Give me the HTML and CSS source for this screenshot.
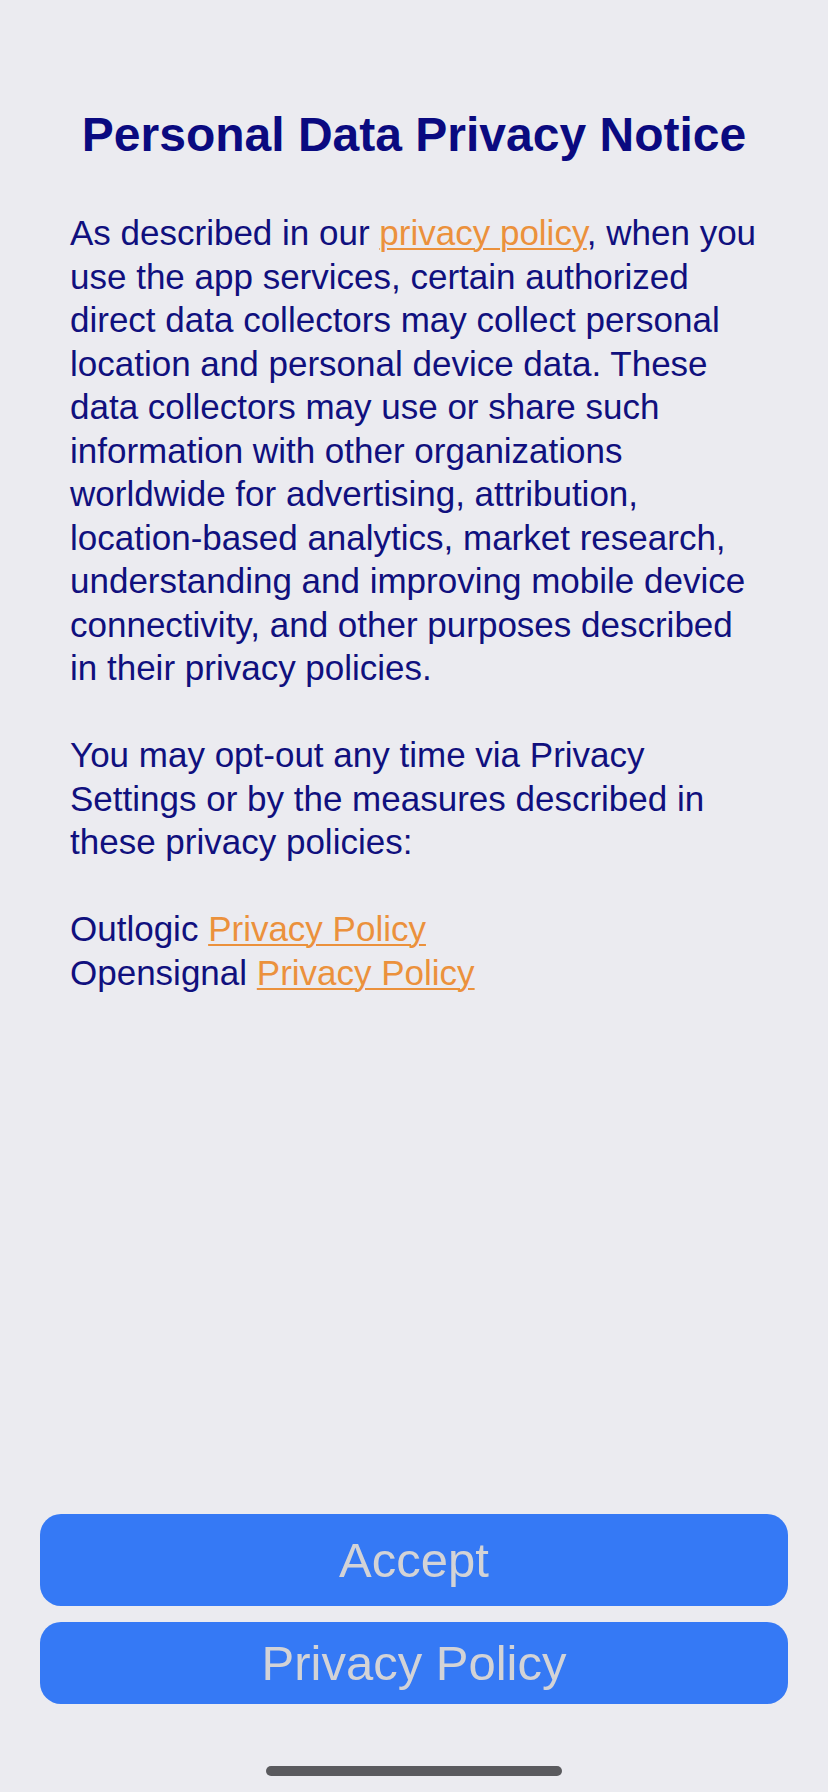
FILE: index.html
```html
<!doctype html>
<html>
<head>
<meta charset="utf-8">
<link rel="stylesheet" href="styles.css">
</head>
<body>
<div class="screen">

	<div class="notice">
		<h1 class="title">Personal Data Privacy Notice</h1>

		<p class="text">As described in our <a class="link" href="#">privacy policy</a>, when you use the app services, certain authorized direct data collectors may collect personal location and personal device data. These data collectors may use or share such information with other organizations worldwide for advertising, attribution, location-based analytics, market research, understanding and improving mobile device connectivity, and other purposes described in their privacy policies.</p>

		<p class="text">You may opt-out any time via Privacy Settings or by the measures described in these privacy policies:</p>

		<p class="text">Outlogic <a class="link" href="#">Privacy Policy</a><br>Opensignal <a class="link" href="#">Privacy Policy</a></p>
	</div>

	<div class="actions">
		<button class="btn btn-accept">Accept</button>
		<button class="btn btn-policy">Privacy Policy</button>
	</div>

	<div class="home-bar"></div>

</div>
</body>
</html>
```

FILE: styles.css
```css
*{margin:0; padding:0; box-sizing:border-box;}
html,body{background:#ebebf0;}
body{font-family:"Liberation Sans", Arial, sans-serif;}

.screen{
	min-height:1792px;
	display:flex; flex-direction:column;
}

.notice{
	padding:106px 63px 0 70px;
}
.title{
	font-size:48px; line-height:58px; font-weight:bold;
	color:#0a0a80; text-align:center;
	margin:0 -63px 47px -70px;
}
.text{
	font-size:35px; line-height:43.5px;
	color:#10107e;
	margin-bottom:43.5px;
}
.link{
	color:#eb913c;
	text-decoration:underline;
	text-decoration-thickness:1.5px;
	text-underline-offset:3px;
}

.actions{
	margin-top:auto;
	padding:0 40px;
	display:flex; flex-direction:column; gap:16px;
}
.btn{
	border:none; border-radius:21px;
	background:#3579f5; color:#d3d3d6;
	font-family:"Liberation Sans", Arial, sans-serif;
	font-size:49px; width:100%;
}
.btn-accept{height:92px;}
.btn-policy{height:82px;}

.home-bar{
	width:296px; height:10px; border-radius:5px;
	background:#5a5a5e;
	margin:62px auto 16px;
}
```
